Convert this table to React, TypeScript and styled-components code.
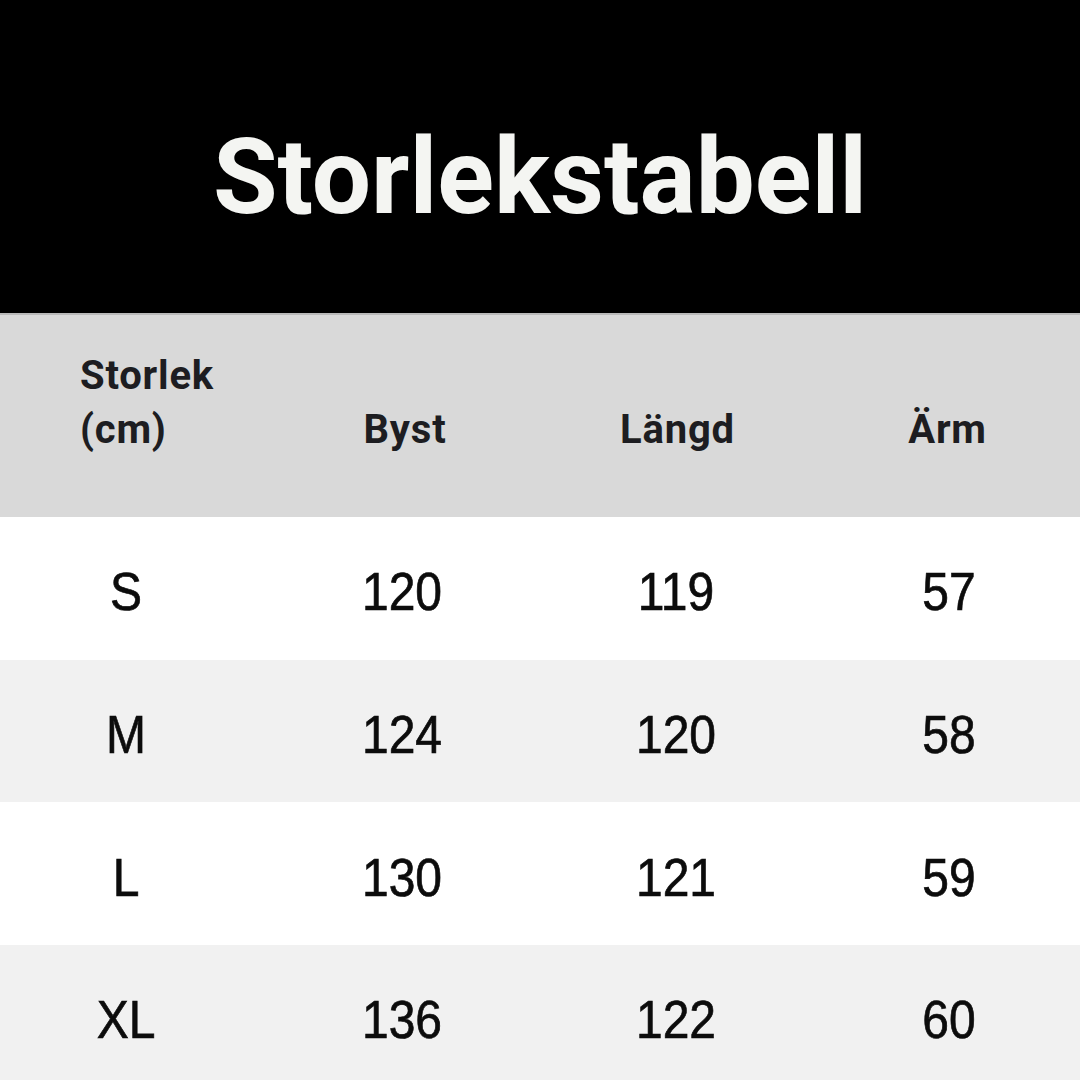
import React from 'react';
import styled, { createGlobalStyle } from 'styled-components';

const GlobalStyle = createGlobalStyle`
  html, body {
    margin: 0;
    padding: 0;
    background: #ffffff;
  }
`;

const Page = styled.div`
  width: 1080px;
  height: 1080px;
  overflow: hidden;
  display: flex;
  flex-direction: column;
`;

const Banner = styled.header`
  height: 313px;
  flex-shrink: 0;
  background: #000000;
  display: flex;
  align-items: center;
  justify-content: center;
`;

const Title = styled.h1`
  margin: 0;
  padding-top: 42px;
  font-family: Roboto, 'Liberation Sans', sans-serif;
  font-weight: 700;
  font-size: 105px;
  line-height: 1;
  color: #f4f5f2;
`;

const Table = styled.div`
  display: flex;
  flex-direction: column;
  flex-shrink: 0;
  border-top: 2px solid #b9b9b9;
`;

const HeadRow = styled.div`
  height: 202px;
  flex-shrink: 0;
  background: #d9d9d9;
  display: grid;
  grid-template-columns: 270px 270px 275px 265px;
  align-items: end;
  padding-bottom: 60px;
  box-sizing: border-box;
`;

const HeadCell = styled.div<{ $left?: boolean }>`
  font-family: Roboto, 'Liberation Sans', sans-serif;
  font-weight: 700;
  font-size: 40px;
  line-height: 54px;
  letter-spacing: 0.8px;
  color: #1d1d21;
  text-align: ${(p) => (p.$left ? 'left' : 'center')};
  padding-left: ${(p) => (p.$left ? '80px' : '0')};
`;

const Row = styled.div<{ $shade: boolean }>`
  height: 142.7px;
  flex-shrink: 0;
  background: ${(p) => (p.$shade ? '#f1f1f1' : '#ffffff')};
  display: grid;
  grid-template-columns: 252px 300px 248px 298px;
  align-items: center;
`;

const Cell = styled.div`
  padding-top: 7px;
  font-family: 'Liberation Sans', Arial, sans-serif;
  font-size: 48px;
  color: #0c0c0c;
  -webkit-text-stroke: 0.6px #0c0c0c;
  text-align: center;
  transform: scaleY(1.1);
`;

const rows = [
  ['S', '120', '119', '57'],
  ['M', '124', '120', '58'],
  ['L', '130', '121', '59'],
  ['XL', '136', '122', '60'],
];

export default function App() {
  return (
    <Page>
      <GlobalStyle />
      <Banner>
        <Title>Storlekstabell</Title>
      </Banner>
      <Table>
        <HeadRow>
          <HeadCell $left>
            Storlek
            <br />
            (cm)
          </HeadCell>
          <HeadCell>Byst</HeadCell>
          <HeadCell>Längd</HeadCell>
          <HeadCell>Ärm</HeadCell>
        </HeadRow>
        {rows.map((r, i) => (
          <Row key={r[0]} $shade={i % 2 === 1}>
            {r.map((v, j) => (
              <Cell key={j}>{v}</Cell>
            ))}
          </Row>
        ))}
      </Table>
    </Page>
  );
}
